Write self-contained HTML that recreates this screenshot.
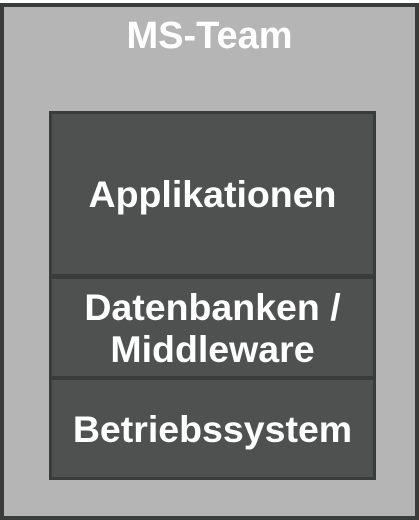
<!DOCTYPE html>
<html><head><style>
body{margin:0;width:419px;height:520px;overflow:hidden;background:#fff;font-family:"Liberation Sans",sans-serif;font-weight:bold;color:#fff}
.o{position:absolute;left:0;top:3px;width:411px;height:509px;border:4px solid #3a3c3b;background:#b4b5b4}
.t{position:absolute;left:0;width:419px;top:15px;text-align:center;font-size:38px;line-height:42px}
.b{position:absolute;left:49px;width:321px;background:#4f5150;border:3px solid #3a3c3b;display:flex;align-items:center;justify-content:center;text-align:center;font-size:37.5px;line-height:42px}
</style></head><body>
<div class="o"></div>
<div class="t">MS-Team</div>
<div class="b" style="top:111px;height:160px">Applikationen</div>
<div class="b" style="top:276px;height:97px">Datenbanken /<br>Middleware</div>
<div class="b" style="top:377px;height:97px">Betriebssystem</div>
</body></html>
